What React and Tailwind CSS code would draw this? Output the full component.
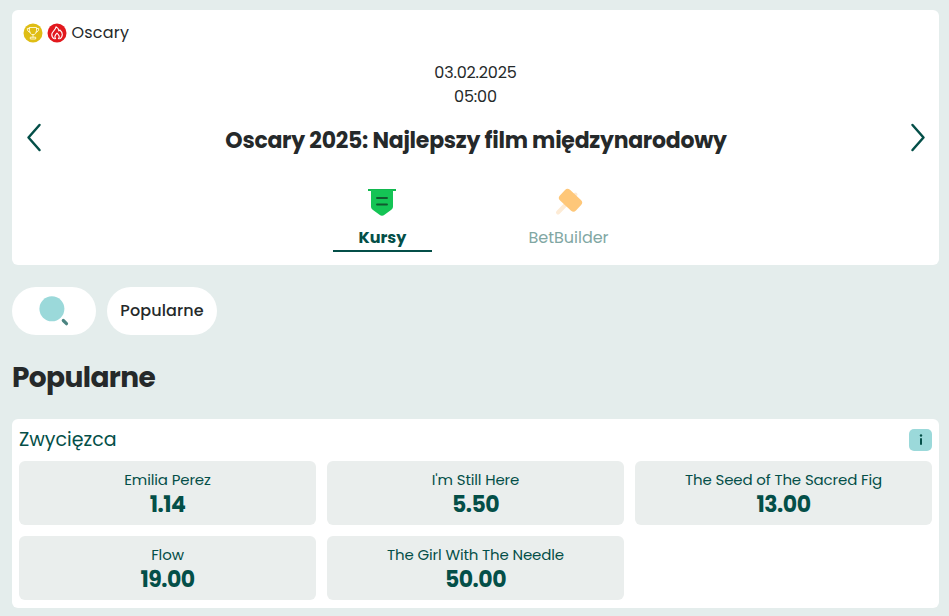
import React, { useState } from 'react';

const outcomes = [
  { id: 1, name: 'Emilia Perez', odds: '1.14' },
  { id: 2, name: "I'm Still Here", odds: '5.50' },
  { id: 3, name: 'The Seed of The Sacred Fig', odds: '13.00' },
  { id: 4, name: 'Flow', odds: '19.00' },
  { id: 5, name: 'The Girl With The Needle', odds: '50.00' },
];

const TrophyIcon = () => (
  <svg className="h-5 w-5" viewBox="0 0 20 20" fill="none">
    <circle cx="10" cy="10" r="9.5" fill="#dfbd14" />
    <g stroke="#fffbe0" strokeWidth={0.9} strokeLinecap="round" strokeLinejoin="round">
      <path d="M6.5 4.5h7v3.2c0 2.4-1.5 4-3.5 4s-3.5-1.6-3.5-4z" />
      <path d="M6.5 5.5H4.3c0 2.2.9 3.5 2.8 3.8M13.5 5.5h2.2c0 2.2-.9 3.5-2.8 3.8" />
      <path d="M10 11.7v2.4M7.3 15.6v-1.4h5.4v1.4z" />
    </g>
  </svg>
);

const FlameIcon = () => (
  <svg className="h-5 w-5" viewBox="0 0 20 20" fill="none">
    <circle cx="10" cy="10" r="9.5" fill="#e2181d" />
    <g stroke="#fff" strokeWidth={1.1} strokeLinecap="round" strokeLinejoin="round">
      <path d="M7.4 15.7C5.6 14.9 4.7 13.4 4.8 11.5c.1-3.1 3.7-4.2 4.2-7.7 2 1 2.8 2.6 2.9 4.1l1-.9c1.5 1.3 2.4 2.9 2.4 4.5 0 2-.9 3.4-2.6 4.2" />
      <path d="M8.6 15.6c-1.7-1.7-.7-3.3 1.4-5.4 2.2 2.1 3.1 3.7 1.4 5.4" />
    </g>
  </svg>
);

const OddsIcon = () => (
  <svg className="h-7 w-7" viewBox="0 0 28 28">
    <path d="M0 1h28v2H0z" fill="#12b84f" />
    <path d="M3 2h22v16.5c0 1.5-.7 2.6-2 3.5l-6.5 4.8c-1.6 1.2-3.4 1.2-5 0L5 22c-1.3-.9-2-2-2-3.5z" fill="#14c455" />
    <path d="M9 10h10M9 16.5h10" stroke="#11592f" strokeWidth={1.9} strokeLinecap="round" />
  </svg>
);

const HammerIcon = () => (
  <svg className="h-7 w-7" viewBox="0 0 28 28">
    <path d="M3 24.5 20.5 6.5" stroke="#fdebd5" strokeWidth={4} strokeLinecap="round" />
    <rect x="4.5" y="5" width="22" height="14.5" rx="3.5" transform="rotate(43 15.5 12.25)" fill="#fec779" />
  </svg>
);

const SearchIcon = () => (
  <svg className="h-8 w-8" viewBox="0 0 32 32">
    <circle cx="13.9" cy="13.8" r="12.5" fill="#9bd9da" />
    <path d="m25.3 25.5 3.2 3.2" stroke="#4b8481" strokeWidth={3.2} strokeLinecap="round" />
  </svg>
);

const Arrow = ({ direction }) => (
  <button aria-label={direction} className="flex h-8 w-6 items-center justify-center">
    <svg className="h-8 w-4" viewBox="0 0 16 32" fill="none">
      <path
        d={direction === 'previous' ? 'M13.5 4 2.5 16.5 13.5 29' : 'M2.5 4l11 12.5L2.5 29'}
        stroke="#044f48"
        strokeWidth={2.5}
        strokeLinecap="round"
        strokeLinejoin="round"
      />
    </svg>
  </button>
);

const EventHeader = () => {
  const [tab, setTab] = useState('odds');

  return (
    <section className="h-[255px] rounded-md bg-white">
      <div className="flex h-[46px] items-center gap-1 pl-[10.5px] text-[#25292a]">
        <TrophyIcon />
        <FlameIcon />
        <span className="ml-[1px] text-base tracking-[0.2px]">Oscary</span>
      </div>

      <div className="mt-[5px] text-center text-base leading-6 tracking-[-0.15px] text-[#25292a]">
        <p>03.02.2025</p>
        <p>05:00</p>
      </div>

      <div className="mt-1.5 flex h-11 items-center justify-between pr-[9px] pl-2.5">
        <Arrow direction="previous" />
        <h1 className="pt-1.5 text-[22px] font-bold tracking-[-0.26px] whitespace-nowrap text-[#25292a]">
          Oscary 2025: Najlepszy film międzynarodowy
        </h1>
        <Arrow direction="next" />
      </div>

      <div className="mt-[29px] flex justify-center gap-[87px]">
        <button
          onClick={() => setTab('odds')}
          className={`flex h-[64px] w-[99px] flex-col items-center border-b-2 ${tab === 'odds' ? 'border-[#044f48]' : 'border-transparent'}`}
        >
          <span className="pr-px">
            <OddsIcon />
          </span>
          <span className="mt-2.5 text-base font-bold text-[#044f48]">Kursy</span>
        </button>
        <button
          onClick={() => setTab('builder')}
          className={`flex h-[64px] w-[99px] flex-col items-center border-b-2 ${tab === 'builder' ? 'border-[#044f48]' : 'border-transparent'}`}
        >
          <HammerIcon />
          <span className="mt-2.5 text-base text-[#81a7a3]">BetBuilder</span>
        </button>
      </div>
    </section>
  );
};

const Market = () => (
  <section className="mt-[24px] h-[189px] rounded-md bg-white px-[7px] text-[#044f48]">
    <div className="flex h-[42px] items-center justify-between">
      <h3 className="text-[19px]">Zwycięzca</h3>
      <button aria-label="Info" className="flex h-[22px] w-[23px] items-center justify-center rounded-[5px] bg-[#9bd9da]">
        <svg className="h-3 w-3" viewBox="0 0 12 12" fill="#044f48">
          <circle cx="6" cy="1.5" r="1.2" />
          <rect x="5" y="4" width="2" height="7" rx="1" />
        </svg>
      </button>
    </div>
    <div className="grid grid-cols-3 gap-[11px]">
      {outcomes.map((outcome) => (
        <button key={outcome.id} className="flex h-16 flex-col items-center rounded-md bg-[#eaeeed] pt-2">
          <span className="text-[15px] leading-[22px] tracking-[-0.14px]">{outcome.name}</span>
          <span className="text-[22px] leading-7 font-bold tracking-[-0.5px]">{outcome.odds}</span>
        </button>
      ))}
    </div>
  </section>
);

const App = () => {
  return (
    <main className="h-[616px] overflow-hidden bg-[#e4edec] pt-2.5 pr-2.5 pl-3 font-[Poppins,Inter,sans-serif]">
      <EventHeader />

      <div className="mt-[22px] flex gap-[11px]">
        <button aria-label="Search" className="flex h-12 w-[84px] items-center justify-center rounded-full bg-white">
          <SearchIcon />
        </button>
        <button className="h-12 w-[110px] rounded-full bg-white text-base font-medium tracking-[0.1px] text-[#25292a]">
          Popularne
        </button>
      </div>

      <h2 className="mt-[25px] text-[28px] leading-[35px] font-bold tracking-[-0.6px] text-[#25292a]">Popularne</h2>

      <Market />
    </main>
  );
};

export default App;
